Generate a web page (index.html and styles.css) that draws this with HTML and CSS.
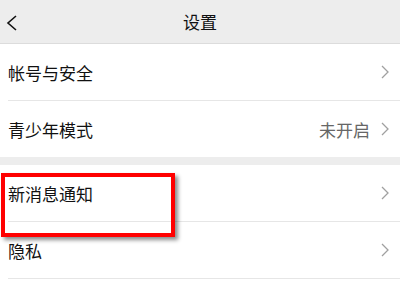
FILE: index.html
```html
<!DOCTYPE html>
<html lang="zh-CN">
<head>
<meta charset="utf-8">
<link rel="stylesheet" href="styles.css">
</head>
<body>
<div class="page">
  <header class="nav">
    <svg class="back" width="12" height="16" viewBox="0 0 12 16"><path d="M10 1 L2 8 L10 15" fill="none" stroke="#111" stroke-width="1.6"/></svg>
    <div class="title">设置</div>
  </header>
  <div class="group">
    <div class="row"><span class="label">帐号与安全</span><span class="right"><svg class="chev" width="8" height="14" viewBox="0 0 8 14"><path d="M1 1 L7 7 L1 13" fill="none" stroke="#a0a0a0" stroke-width="1.3"/></svg></span></div>
    <div class="row last"><span class="label">青少年模式</span><span class="right"><span class="value">未开启</span><svg class="chev" width="8" height="14" viewBox="0 0 8 14"><path d="M1 1 L7 7 L1 13" fill="none" stroke="#a0a0a0" stroke-width="1.3"/></svg></span></div>
  </div>
  <div class="group final">
    <div class="row"><span class="label">新消息通知</span><span class="right"><svg class="chev" width="8" height="14" viewBox="0 0 8 14"><path d="M1 1 L7 7 L1 13" fill="none" stroke="#a0a0a0" stroke-width="1.3"/></svg></span></div>
    <div class="row"><span class="label">隐私</span><span class="right"><svg class="chev" width="8" height="14" viewBox="0 0 8 14"><path d="M1 1 L7 7 L1 13" fill="none" stroke="#a0a0a0" stroke-width="1.3"/></svg></span></div>
  </div>
  <div class="highlight"></div>
</div>
</body>
</html>
```
FILE: styles.css
```css
html, body { margin: 0; padding: 0; }
body {
  width: 400px;
  height: 300px;
  overflow: hidden;
  background: #fff;
  font-family: "Noto Sans CJK SC", "Noto Sans", sans-serif;
}
.page { position: relative; }
.nav {
  position: relative;
  height: 43px;
  background: #ededed;
  border-bottom: 1px solid #dcdcdc;
  display: flex;
  align-items: center;
  justify-content: center;
}
.back { position: absolute; left: 6px; top: 15px; }
.title { font-size: 17px; color: #111; }
.group { background: #fff; border-bottom: 8px solid #ededed; }
.group.final { border-bottom: none; }
.row {
  height: 56px;
  margin-left: 8px;
  padding-right: 11px;
  border-bottom: 1px solid #e6e6e6;
  display: flex;
  align-items: center;
  justify-content: space-between;
}
.row.last { border-bottom: none; }
.label { font-size: 17px; color: #111; }
.right { display: flex; align-items: center; gap: 11px; }
.value { font-size: 17px; color: #666; }
.chev { display: block; }
.highlight {
  position: absolute;
  left: 1px;
  top: 173px;
  width: 166px;
  height: 56px;
  border: 4px solid #ff0000;
  box-shadow: 3px 3px 4px rgba(0,0,0,0.45);
}
```
